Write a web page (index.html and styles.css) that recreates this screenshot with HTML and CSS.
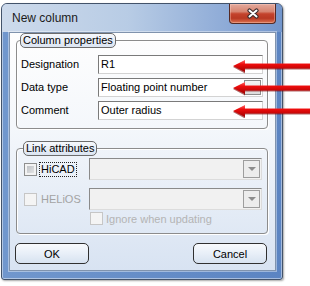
FILE: index.html
```html
<!DOCTYPE html>
<html>
<head>
<meta charset="utf-8">
<link rel="stylesheet" href="styles.css">
</head>
<body>
<div class="window">
  <div class="titlebar">
    <span class="title">New column</span>
    <div class="close">
      <svg width="14" height="11" viewBox="0 0 14 11">
        <path d="M3.5 2.5 L10.5 8.5 M10.5 2.5 L3.5 8.5" stroke="#3b2a2c" stroke-width="4.2" stroke-linecap="round"/>
        <path d="M3.5 2.5 L10.5 8.5 M10.5 2.5 L3.5 8.5" stroke="#ffffff" stroke-width="2" stroke-linecap="round"/>
      </svg>
    </div>
  </div>
  <div class="client">
    <div class="group group-props">
      <div class="legend">Column properties</div>
      <div class="form">
        <span class="lbl">Designation</span><div class="field"><span class="val">R1</span></div>
        <span class="lbl">Data type</span><div class="field"><span class="val">Floating point number</span><span class="dd"></span></div>
        <span class="lbl">Comment</span><div class="field"><span class="val">Outer radius</span></div>
      </div>
    </div>
    <div class="group group-link">
      <div class="legend">Link attributes</div>
      <div class="lrow">
        <div class="cbcell"><span class="cb"></span><span class="focus">HiCAD</span></div>
        <div class="dcombo"><span class="dbtn"></span></div>
      </div>
      <div class="lrow lrow2">
        <div class="cbcell"><span class="cb dis"></span><span class="distext">HELiOS</span></div>
        <div class="dcombo"><span class="dbtn"></span></div>
      </div>
      <div class="lrow lrow3">
        <span class="cb dis"></span><span class="distext light">Ignore when updating</span>
      </div>
    </div>
    <div class="buttons">
      <div class="btn">OK</div>
      <div class="btn">Cancel</div>
    </div>
  </div>
</div>
<svg class="arrows" width="78" height="58" viewBox="0 0 78 58">
  <defs>
    <linearGradient id="rg" x1="0" y1="0" x2="0" y2="1">
      <stop offset="0" stop-color="#ff6a6a"/>
      <stop offset="0.35" stop-color="#ee0d0d"/>
      <stop offset="1" stop-color="#a10000"/>
    </linearGradient>
    <g id="ar">
      <polygon points="1,1 13,-5.5 13,-1.5 78,-1.5 78,3.5 13,3.5 13,7.5" fill="#7d0000" opacity="0.6"/>
      <polygon points="1,0 13,-6 13,-2.5 78,-2.5 78,2.5 13,2.5 13,6" fill="url(#rg)"/>
    </g>
  </defs>
  <use href="#ar" x="0" y="6"/>
  <use href="#ar" x="0" y="28"/>
  <use href="#ar" x="0" y="51"/>
</svg>
</body>
</html>
```

FILE: styles.css
```css
body {
  margin: 0;
  width: 310px;
  height: 286px;
  overflow: hidden;
  background: #ffffff;
  font: 11px "Liberation Sans", Arial, sans-serif;
  color: #000;
  position: relative;
}

.window {
  box-sizing: border-box;
  margin: 3px 0 0 1px;
  width: 282px;
  height: 277px;
  border: 1px solid #43536a;
  border-radius: 6px 6px 3px 3px;
  background: linear-gradient(to right, #7197cd, #5b84c2);
  box-shadow: inset 0 0 0 1px rgba(255,255,255,0.45), 1px 1px 2px rgba(0,0,0,0.35);
  display: flex;
  flex-direction: column;
}

.titlebar {
  height: 28px;
  flex: none;
  display: flex;
  align-items: center;
  padding-left: 10px;
  border-radius: 5px 5px 0 0;
  background: linear-gradient(to right, #cddaeb 0%, #b8cce5 45%, #8eabd7 80%, #7396cc 100%);
}

.title {
  font-size: 12px;
  color: #1a1a1a;
}

.close {
  box-sizing: border-box;
  align-self: flex-start;
  margin-left: auto;
  margin-right: 6px;
  width: 47px;
  height: 20px;
  border: 1px solid #552a24;
  border-top: none;
  border-radius: 0 0 4px 4px;
  background: linear-gradient(#e4aa9d 0%, #d78571 40%, #c4432c 52%, #b83923 75%, #dd7351 100%);
  box-shadow: inset 0 0 0 1px rgba(255,220,210,0.35);
  display: flex;
  align-items: center;
  justify-content: center;
}

.client {
  flex: 1;
  margin: 0 6px 8px 7px;
  border: 1px solid #8093ad;
  background: linear-gradient(#fefefe 0%, #f4f7fb 40%, #d8e3f2 100%);
  padding: 7px 7px 6px 6px;
  display: flex;
  flex-direction: column;
  box-shadow: 0 0 0 1px rgba(255,255,255,0.4);
}

.group {
  border: 1px solid #8c8c8c;
  border-radius: 4px;
  box-shadow: inset 1px 1px 0 #ffffff, 1px 1px 0 #ffffff;
}

.legend {
  box-sizing: border-box;
  width: fit-content;
  height: 15px;
  margin: -8px 0 0 -1px;
  padding: 0 2px;
  line-height: 13px;
  border: 1px solid #6c6c6c;
  border-radius: 5px;
  background: linear-gradient(#f6f8fc, #dbe5f2);
}

.group-props {
  padding: 0 3px 8px 4px;
}

.form {
  margin-top: 7px;
  display: grid;
  grid-template-columns: 77px 165px;
  grid-auto-rows: 19px;
  row-gap: 4px;
}

.lbl {
  line-height: 19px;
}

.field {
  box-sizing: border-box;
  height: 19px;
  border: 1px solid;
  border-color: #7a7a7a #d3d3d3 #d3d3d3 #7a7a7a;
  background: #ffffff;
  display: flex;
  align-items: center;
  padding: 1px 1px 1px 2px;
}

.val {
  flex: 1;
  line-height: 15px;
}

.dd {
  box-sizing: border-box;
  width: 17px;
  height: 15px;
  border: 1px solid #8d8d8d;
  background: linear-gradient(#f4f4f4, #dcdcdc);
}

.group-link {
  margin-top: 19px;
  padding: 0 5px 8px 7px;
}

.lrow {
  display: flex;
  align-items: center;
  margin-top: 2px;
}

.lrow2 {
  margin-top: 8px;
}

.lrow3 {
  margin-top: 2px;
  padding-left: 66px;
  height: 13px;
}

.cbcell {
  width: 65px;
  display: flex;
  align-items: center;
}

.cb {
  box-sizing: border-box;
  width: 13px;
  height: 13px;
  flex: none;
  border: 1px solid #8e8f8f;
  background: linear-gradient(135deg, #b5b9be, #ececec);
  box-shadow: inset 0 0 0 2px #f3f3f3;
}

.cb.dis {
  border-color: #c6c6c6;
  background: #f4f4f4;
  box-shadow: none;
}

.focus {
  margin-left: 2px;
  padding: 0 1px;
  border: 1px dotted #222;
  line-height: 13px;
}

.distext {
  margin-left: 4px;
  color: #a3a3a3;
}

.distext.light {
  margin-left: 3px;
  color: #b4b4b4;
}

.dcombo {
  box-sizing: border-box;
  width: 173px;
  height: 22px;
  border: 1px solid;
  border-color: #8a8a8a #dcdcdc #dcdcdc #8a8a8a;
  background: #f1f1f1;
  display: flex;
  justify-content: flex-end;
  align-items: center;
  padding-right: 1px;
}

.dbtn {
  box-sizing: border-box;
  width: 17px;
  height: 18px;
  border: 1px solid #9d9d9d;
  background: #ececec;
  display: flex;
  align-items: center;
  justify-content: center;
}

.dbtn::after {
  content: "";
  border-left: 4px solid transparent;
  border-right: 4px solid transparent;
  border-top: 4px solid #8c8c8c;
}

.buttons {
  margin: auto 1px 0 -1px;
  display: flex;
  justify-content: space-between;
}

.btn {
  box-sizing: border-box;
  width: 74px;
  height: 21px;
  border: 1px solid #303030;
  border-radius: 5px;
  background: linear-gradient(#f8fafd, #e8eff8 50%, #d7e2f0);
  display: flex;
  align-items: center;
  justify-content: center;
}

.arrows {
  position: absolute;
  left: 232px;
  top: 60px;
}
```
